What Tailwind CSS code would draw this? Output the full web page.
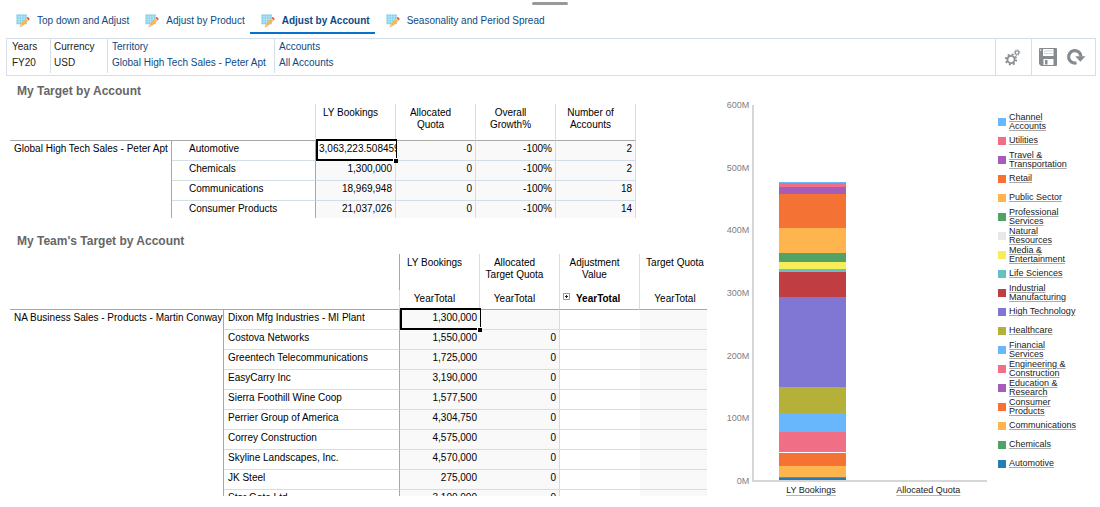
<!DOCTYPE html>
<html lang="en">
  <head>
    <meta charset="UTF-8" />
    <meta name="viewport" content="width=device-width, initial-scale=1.0" />
    <title>Adjust by Account</title>
    <script src="https://cdn.jsdelivr.net/npm/@tailwindcss/browser@4"></script>
  </head>
  <body class="bg-white font-['Liberation_Sans',Arial,sans-serif] text-[10px] leading-4 text-black">
    <!-- Shared icons -->
    <svg class="hidden">
      <symbol id="form-icon" viewBox="0 0 15 15">
        <rect x="0.5" y="0.5" width="11" height="10.5" fill="#7fcdea" />
        <path d="M0.5 3.2h11M0.5 5.8h11M0.5 8.4h11M3.3 0.5v10.5M6 0.5v10.5M8.7 0.5v10.5" stroke="#d5f0fa" stroke-width="0.6" />
        <path d="M4 14l1-3.5 6-6 2.4 2.4-6 6z" fill="#f8b84a" />
        <path d="M11 4.5l1-1q0.6-0.5 1.2 0l1.2 1.2q0.5 0.6 0 1.2l-1 1z" fill="#e8574c" />
        <path d="M10.3 5.2l0.8-0.8 2.4 2.4-0.8 0.8z" fill="#dcdcdc" />
        <path d="M5 10.5l2.4 2.4L4 14z" fill="#e6d3b8" />
        <path d="M4.4 12.7l0.8 0.8L4 14z" fill="#999" />
      </symbol>
    </svg>

    <!-- Collapse handle -->
    <div class="flex h-2 justify-center pt-0.5">
      <div class="h-[3px] w-9 rounded-full bg-[#999]"></div>
    </div>

    <!-- Tabs -->
    <nav class="flex h-[26px] text-[#0b4a85]">
      <a href="#" class="flex items-center gap-[7px] pl-4 pr-4">
        <svg class="size-[14px]"><use href="#form-icon" /></svg>
        Top down and Adjust
      </a>
      <a href="#" class="flex items-center gap-[7px] pr-[5px]">
        <svg class="size-[14px]"><use href="#form-icon" /></svg>
        Adjust by Product
      </a>
      <a href="#" class="flex items-center gap-[7px] border-b-2 border-[#0572ce] pl-[11px] pr-[5px] pt-0.5 font-bold">
        <svg class="size-[14px]"><use href="#form-icon" /></svg>
        Adjust by Account
      </a>
      <a href="#" class="flex items-center gap-[7px] pl-[11px]">
        <svg class="size-[14px]"><use href="#form-icon" /></svg>
        Seasonality and Period Spread
      </a>
    </nav>

    <!-- Point of view bar -->
    <div class="mx-1 mt-1 ml-[6px] flex h-[38px] justify-between border border-[#d6dfe6]">
      <dl class="flex text-[#0b4a85] [&>div]:mb-0.5 [&>div]:border-l [&>div]:border-[#d6dfe6]">
        <div class="w-[43px] border-transparent! pl-1 text-[#222]"><dt>Years</dt><dd>FY20</dd></div>
        <div class="w-[57px] pl-[3px] text-[#222]"><dt>Currency</dt><dd>USD</dd></div>
        <div class="w-[167px] pl-1"><dt>Territory</dt><dd><a href="#">Global High Tech Sales - Peter Apt</a></dd></div>
        <div class="pl-1"><dt>Accounts</dt><dd><a href="#">All Accounts</a></dd></div>
      </dl>
      <div class="flex">
        <button type="button" aria-label="Actions" class="w-9 border-l border-[#d6dfe6] pt-0.5 pl-2">
          <svg class="size-[18px]" viewBox="0 0 18 18" fill="none" stroke="#8b9094">
            <circle cx="7" cy="10.5" r="3.6" stroke-width="1.9" />
            <circle cx="7" cy="10.5" r="5.2" stroke-width="1.8" stroke-dasharray="2 2.08" />
            <circle cx="13" cy="3.6" r="1.8" stroke-width="1.2" />
            <circle cx="13" cy="3.6" r="2.9" stroke-width="1" stroke-dasharray="1.1 1.18" />
          </svg>
        </button>
        <div class="flex items-center gap-2 border-l border-[#d6dfe6] pl-[6px] pr-[9px]">
          <button type="button" aria-label="Save">
            <svg class="size-5" viewBox="0 0 20 20">
              <path d="M2 1h16q1 0 1 1v16q0 1-1 1H3l-2-2V2q0-1 1-1z" fill="#868b90" />
              <path d="M5 2h10.5v7H5zM5.5 12h10v6h-10z" fill="#fff" />
              <path d="M6 4h8.5M6 6.5h8.5" stroke="#c4c7ca" stroke-width="0.8" />
              <path d="M7 13h2.5v4.5H7z" fill="#868b90" />
              <path d="M2 2.5h1.3v1.3H2z" fill="#fff" />
            </svg>
          </button>
          <button type="button" aria-label="Refresh">
            <svg class="size-5" viewBox="0 0 20 20">
              <path d="M10.5 15.8A6.2 6.2 0 1 1 15 9.5" fill="none" stroke="#868b90" stroke-width="3.2" />
              <path d="M9.3 9.2H19.5l-5.2 5.6z" fill="#868b90" />
            </svg>
          </button>
        </div>
      </div>
    </div>

    <main class="flex">
      <!-- Grids -->
      <div class="min-w-0 flex-[707] pl-[10px]">
        <h2 class="pl-[7px] pt-[7px] text-xs leading-4 font-bold text-[#666]">My Target by Account</h2>
        <div class="mt-[5px] h-[114px] overflow-hidden">
          <table class="w-[626px] table-fixed border-separate border-spacing-0">
            <colgroup>
              <col class="w-[162px]" /><col class="w-36" /><col class="w-20" /><col class="w-20" /><col class="w-20" /><col class="w-20" />
            </colgroup>
            <thead>
              <tr class="h-[37px] align-top leading-3 *:border-b *:border-b-[#a9a9a4] *:pt-[3px] *:font-normal">
                <td colspan="2" class="border-r border-r-[#d3dde6]"></td>
                <th class="border-r border-r-[#d3dde6] pr-[10px]">LY Bookings</th>
                <th class="border-r border-r-[#d3dde6] pr-[10px]">Allocated<br />Quota</th>
                <th class="border-r border-r-[#d3dde6] pr-[10px]">Overall<br />Growth%</th>
                <th class="border-r border-r-[#d3dde6] pr-[10px]">Number of<br />Accounts</th>
              </tr>
            </thead>
            <tbody id="targetRows"></tbody>
          </table>
        </div>

        <h2 class="mt-[15px] pl-[7px] text-xs leading-4 font-bold text-[#666]">My Team's Target by Account</h2>
        <div class="mt-[5px] h-[242px] overflow-hidden">
          <table class="w-[710px] table-fixed border-separate border-spacing-0">
            <colgroup>
              <col class="w-[214px]" /><col class="w-44" /><col class="w-20" /><col class="w-20" /><col class="w-20" /><col class="w-20" />
            </colgroup>
            <thead>
              <tr class="h-9 align-top leading-3 *:pt-[3px] *:font-normal">
                <td colspan="2" class="border-r border-r-[#a9a9a4]"></td>
                <th class="border-r border-r-[#d3dde6] pr-[10px]">LY Bookings</th>
                <th class="border-r border-r-[#d3dde6] pr-[10px]">Allocated<br />Target Quota</th>
                <th class="border-r border-r-[#d3dde6] pr-[10px]">Adjustment<br />Value</th>
                <th class="pr-[10px]">Target Quota</th>
              </tr>
              <tr class="h-5 align-top *:border-b *:border-b-[#a9a9a4] *:pt-px *:font-normal">
                <td colspan="2" class="border-r border-r-[#d3dde6]"></td>
                <th class="border-r border-r-[#d3dde6] pr-[10px]">YearTotal</th>
                <th class="border-r border-r-[#d3dde6] pr-[10px]">YearTotal</th>
                <th class="border-r border-r-[#d3dde6]">
                  <button type="button" class="flex gap-[5px] pl-[3px] font-bold" aria-label="Expand YearTotal">
                    <svg class="mt-0.5 size-2" viewBox="0 0 8 8" fill="none">
                      <path d="M0.5 0.5h6v6h-6z" stroke="#999" />
                      <path d="M2 3.5h3M3.5 2v3" stroke="#222" />
                    </svg>
                    YearTotal
                  </button>
                </th>
                <th class="pr-[10px]">YearTotal</th>
              </tr>
            </thead>
            <tbody id="teamRows"></tbody>
          </table>
        </div>
      </div>

      <!-- Chart -->
      <div class="flex min-w-0 flex-[393] pt-[29px] pr-[5px] pb-3 text-[9px]">
        <div class="-mt-2 flex h-[392px] w-[45px] flex-col justify-between pr-[3px] text-right text-[#7f7f7f]">
          <span>600M</span><span>500M</span><span>400M</span><span>300M</span><span>200M</span><span>100M</span><span>0M</span>
        </div>
        <div class="min-w-0 flex-1">
          <div class="grid h-[377px] grid-cols-2 border-b-2 border-l-2 border-[#d6d6d6]">
            <div id="bookingsBar" class="mx-auto flex w-[57%] flex-col justify-end"></div>
            <div></div>
          </div>
          <div class="grid grid-cols-2 text-center text-[#222]">
            <a href="#" class="underline decoration-[#b5b5b5] underline-offset-2">LY Bookings</a>
            <a href="#" class="underline decoration-[#b5b5b5] underline-offset-2">Allocated Quota</a>
          </div>
        </div>
        <ul id="legend" class="ml-[11px] mt-[7px] w-[97px]"></ul>
      </div>
    </main>

    <script>
      const targets = [
        ["Automotive", "3,063,223.508459", "0", "-100%", "2"],
        ["Chemicals", "1,300,000", "0", "-100%", "2"],
        ["Communications", "18,969,948", "0", "-100%", "18"],
        ["Consumer Products", "21,037,026", "0", "-100%", "14"],
      ];

      const team = [
        ["Dixon Mfg Industries - MI Plant", "1,300,000", ""],
        ["Costova Networks", "1,550,000", "0"],
        ["Greentech Telecommunications", "1,725,000", "0"],
        ["EasyCarry Inc", "3,190,000", "0"],
        ["Sierra Foothill Wine Coop", "1,577,500", "0"],
        ["Perrier Group of America", "4,304,750", "0"],
        ["Correy Construction", "4,575,000", "0"],
        ["Skyline Landscapes, Inc.", "4,570,000", "0"],
        ["JK Steel", "275,000", "0"],
        ["Star Gate Ltd.", "3,100,000", "0"],
      ];

      // name, colour, bookings in millions (top of the stack first)
      const industries = [
        ["Channel Accounts", "#68b6fc", 3],
        ["Utilities", "#f06f87", 5],
        ["Travel & Transportation", "#a55db9", 12],
        ["Retail", "#f57235", 54],
        ["Public Sector", "#ffb54d", 40],
        ["Professional Services", "#51a264", 15],
        ["Natural Resources", "#e7e8ea", 0],
        ["Media & Entertainment", "#f9ec59", 11],
        ["Life Sciences", "#62c2c5", 4],
        ["Industrial Manufacturing", "#c03d41", 41],
        ["High Technology", "#7f77d3", 143],
        ["Healthcare", "#b5b039", 42],
        ["Financial Services", "#68b6fc", 30],
        ["Engineering & Construction", "#f06f87", 32],
        ["Education & Research", "#a55db9", 0],
        ["Consumer Products", "#f57235", 21],
        ["Communications", "#ffb54d", 18],
        ["Chemicals", "#51a264", 2],
        ["Automotive", "#267db3", 3],
      ];

      const selection = `
        <span class="absolute -top-0.5 left-0 -right-px h-[22px] border-2 border-r border-black"></span>
        <span class="absolute top-[17px] -right-0.5 z-10 size-[5px] border-t border-l border-white bg-black"></span>`;

      document.getElementById("targetRows").innerHTML = targets
        .map(([name, ...values], i) => `
          <tr class="h-5 align-top">
            ${i === 0 ? `<th rowspan="4" class="border-r border-[#a9a9a4] pl-1 text-left font-normal whitespace-nowrap">Global High Tech Sales - Peter Apt</th>` : ""}
            <th class="border-r border-b border-r-[#a9a9a4] border-b-[#d3dde6] pl-[17px] text-left font-normal">${name}</th>
            ${values
              .map((value, col) => i === 0 && col === 0
                ? `<td class="relative border-b border-b-[#d3dde6] bg-white pl-[3px] whitespace-nowrap"><div class="overflow-hidden">${value}</div>${selection}</td>`
                : `<td class="border-r border-b border-[#d3dde6] bg-[#f9f9f9] pr-[3px] text-right">${value}</td>`)
              .join("")}
          </tr>`)
        .join("");

      document.getElementById("teamRows").innerHTML = team
        .map(([name, bookings, quota], i) => `
          <tr class="h-5 align-top *:border-b *:border-b-[#d3dde6]">
            ${i === 0 ? `<th rowspan="10" class="border-r border-r-[#a9a9a4] pl-1 text-left font-normal whitespace-nowrap">NA Business Sales - Products - Martin Conway</th>` : ""}
            <th class="border-r border-r-[#a9a9a4] pl-1 text-left font-normal">${name}</th>
            <td class="relative bg-[#f9f9f9] pr-[3px] text-right">${bookings}${i === 0 ? selection : ""}</td>
            <td class="border-r border-r-[#d3dde6] bg-[#f9f9f9] pr-[3px] text-right">${quota}</td>
            <td></td>
            <td class="bg-[#f9f9f9]"></td>
          </tr>`)
        .join("");

      // Education is the only empty industry that leaves a visible gap in the stack
      const axisMax = 600;
      document.getElementById("bookingsBar").innerHTML = industries
        .map(([name, color, value]) => name === "Education & Research"
          ? `<div class="h-px bg-white/80"></div>`
          : `<div style="height: ${(value / axisMax) * 100}%; background: ${color}"></div>`)
        .join("");

      document.getElementById("legend").innerHTML = industries
        .map(([name, color]) => `
          <li class="flex h-[19px] items-center gap-[3px] leading-[9px]">
            <span class="size-2 shrink-0" style="background: ${color}"></span>
            <a href="#" class="w-[70px] text-[#222] underline decoration-[#aaa] underline-offset-1">${name.replace("&", "&amp;").replace(/^(Channel|Natural|Consumer|Industrial|Professional|Financial) /, "$1<br />")}</a>
          </li>`)
        .join("");
    </script>
  </body>
</html>
